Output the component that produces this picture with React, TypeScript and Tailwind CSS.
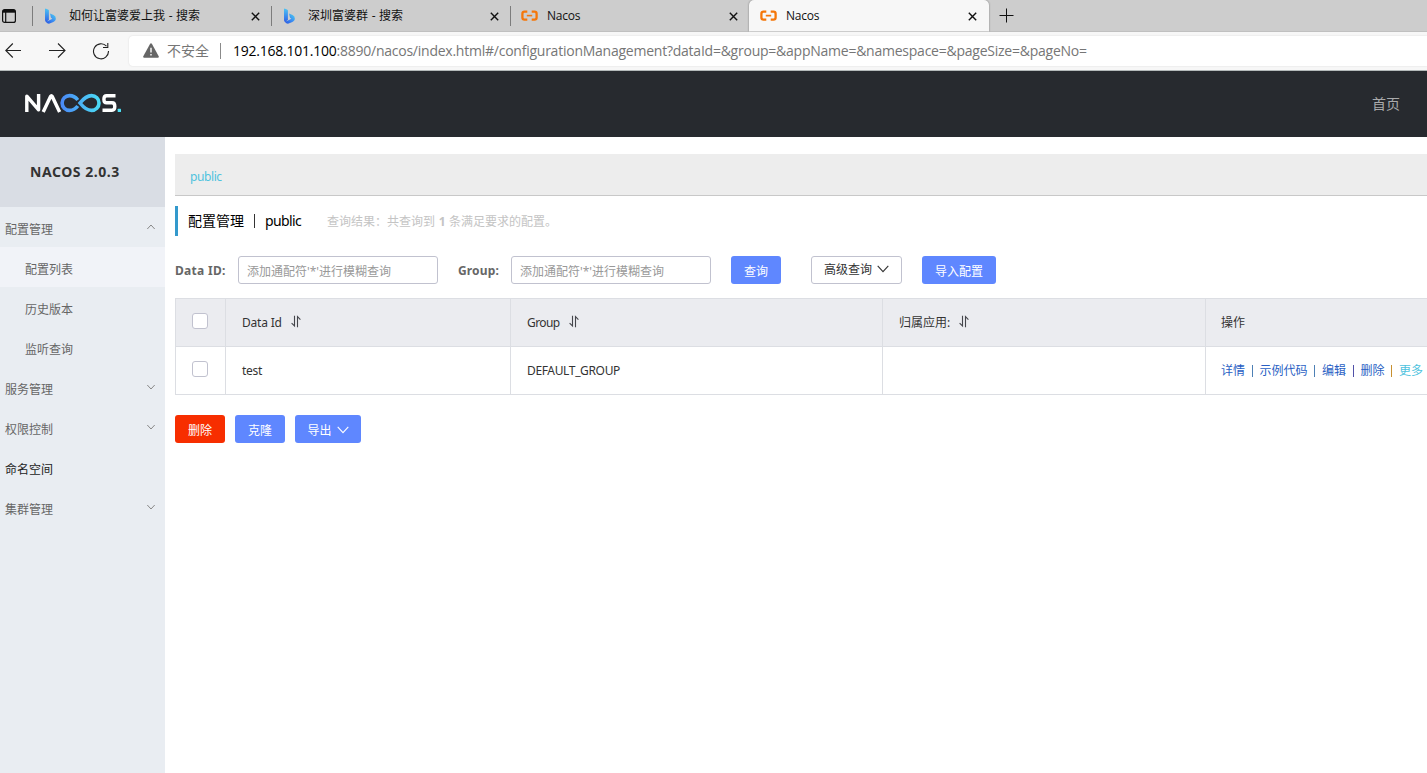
import type { ReactNode } from "react";

function BingIcon() {
  return (
    <svg width="13" height="16" viewBox="0 0 13 16" className="shrink-0">
      <defs>
        <linearGradient id="bingStem" x1="0" y1="0" x2="0" y2="1">
          <stop offset="0" stopColor="#4cc3f3" />
          <stop offset="1" stopColor="#2f62e6" />
        </linearGradient>
        <linearGradient id="bingBowl" x1="0" y1="1" x2="1" y2="0">
          <stop offset="0" stopColor="#2450e0" />
          <stop offset="0.5" stopColor="#3b8df2" />
          <stop offset="1" stopColor="#4fd3ee" />
        </linearGradient>
      </defs>
      <path d="M1.5 0.6 L4 1.6 Q4.9 1.9 4.9 2.6 V12 L2.2 13.8 Q1 13.2 1 12 V1 Z" fill="url(#bingStem)" />
      <path d="M6 5.4 L9.6 7 Q12 8.2 11.9 11 Q11.6 13 9.4 14 L5.6 15.6 Q3.4 16 2 14 Q1.5 13.2 1.3 12.6 Q3 14 5 12.6 L8.4 10.7 L7 9.8 Z" fill="url(#bingBowl)" />
    </svg>
  );
}

function NacosTabIcon() {
  return (
    <svg width="17" height="12" viewBox="0 0 17 12" className="shrink-0" fill="none" stroke="#f5770a">
      <path d="M6.3 1.6H3.5Q1.4 1.6 1.4 3.7V7.5Q1.4 9.6 3.5 9.6H6.3" strokeWidth="2.3" />
      <path d="M10.7 1.6H13.5Q15.6 1.6 15.6 3.7V7.5Q15.6 9.6 13.5 9.6H10.7" strokeWidth="2.3" />
      <path d="M5.8 5.6H11.2" strokeWidth="1.6" />
    </svg>
  );
}

function CloseIcon() {
  return (
    <svg width="9" height="9" viewBox="0 0 9 9" className="mt-px shrink-0" stroke="#111" strokeWidth="1.4">
      <path d="M0.8 0.8L8.2 8.2M8.2 0.8L0.8 8.2" />
    </svg>
  );
}

function Tab({ icon, children, className = "" }: { icon: ReactNode; children: ReactNode; className?: string }) {
  return (
    <div className={`flex h-8 shrink-0 items-center pr-[12px] text-[12px] text-[#111] ${className}`}>
      <span className="flex w-[25px] shrink-0 items-center">{icon}</span>
      <span className="grow whitespace-nowrap">{children}</span>
      <CloseIcon />
    </div>
  );
}

function Chevron({ up = false, className = "" }: { up?: boolean; className?: string }) {
  return (
    <svg width="10" height="6" viewBox="0 0 10 6" className={className} fill="none" stroke="currentColor">
      <path d={up ? "M1.3 5L5 1L8.7 5" : "M1.3 1L5 5L8.7 1"} />
    </svg>
  );
}

function ButtonChevron() {
  return (
    <svg width="12" height="8" viewBox="0 0 12 8" fill="none" stroke="currentColor" strokeWidth="1.1" className="mb-[2px] ml-[5px] shrink-0">
      <path d="M0.7 0.9L6 6.6L11.3 0.9" />
    </svg>
  );
}

function SortIcon() {
  return (
    <svg width="12" height="13" viewBox="0 0 12 13" fill="none" stroke="#45464c" strokeWidth="1.1" className="mb-[2px] ml-2 shrink-0">
      <path d="M4.5 0.7V11L1.6 8.2" />
      <path d="M7.5 12.3V1.7L10.4 4.6" />
    </svg>
  );
}

function NacosLogo() {
  return (
    <svg width="98" height="20" viewBox="0 0 98 20" fill="none" className="mb-[2px]">
      <defs>
        <linearGradient id="loop" x1="36" y1="0" x2="78" y2="0" gradientUnits="userSpaceOnUse">
          <stop offset="0" stopColor="#4a87f7" />
          <stop offset="1" stopColor="#4be0f5" />
        </linearGradient>
      </defs>
      <path d="M2.8 19V3.2L14.6 16.8V1" stroke="#fff" strokeWidth="3.4" strokeLinejoin="round" />
      <path d="M19.2 19L26.6 3.4Q27.4 2 28.2 3.4L35.6 19" stroke="#fff" strokeWidth="3.4" />
      <path d="M53.8 7Q50.4 2.6 45.5 2.6A7.4 7.4 0 0 0 45.5 17.4Q50.4 17.4 53.8 13" stroke="url(#loop)" strokeWidth="3.6" />
      <path d="M56 10Q61.8 2.6 67.6 2.6A7.4 7.4 0 0 1 67.6 17.4Q61.8 17.4 56 10Z" stroke="url(#loop)" strokeWidth="3.6" />
      <path d="M91.5 2.7H82.6Q79.9 2.7 79.9 6.2Q79.9 9.8 82.6 9.8H88Q90.8 9.8 90.8 13.5Q90.8 17.2 88 17.2H78.5" stroke="#fff" strokeWidth="3.4" />
      <rect x="93.7" y="15.8" width="3.3" height="3.2" rx="0.5" fill="#4be0f5" />
    </svg>
  );
}

function MenuItem({ label, arrow, className = "" }: { label: string; arrow?: "up" | "down"; className?: string }) {
  return (
    <div className={`flex h-10 items-center justify-between pr-[9px] pl-[5px] ${className}`}>
      <span className="pt-[5px]">{label}</span>
      {arrow && <Chevron up={arrow === "up"} className="text-[#888]" />}
    </div>
  );
}

function SubItem({ label, active = false }: { label: string; active?: boolean }) {
  return (
    <div className={`flex h-10 items-center pt-[5px] pl-[25px] ${active ? "bg-[#f1f3f8]" : ""}`}>{label}</div>
  );
}

function PrimaryButton({ children, className = "" }: { children: ReactNode; className?: string }) {
  return (
    <button className={`flex h-7 shrink-0 items-center justify-center rounded-[3px] pt-[3px] text-white ${className}`}>
      {children}
    </button>
  );
}

function SearchField() {
  return (
    <input
      className="h-7 w-[200px] shrink-0 rounded-[3px] border border-[#c1c2cf] bg-white pt-[2px] pl-2 placeholder:text-[#999]"
      placeholder="添加通配符'*'进行模糊查询"
    />
  );
}

function Checkbox() {
  return <span className="mb-[3px] block size-4 rounded-[3px] border border-[#c1c2cf] bg-white" />;
}

function Divider({ className = "" }: { className?: string }) {
  return <span className={`mr-[7px] ml-[6.5px] h-3 w-px ${className}`} />;
}

const cell = "flex items-center border-r border-[#dcdee3] pl-4";
const rowGrid = "grid h-12 grid-cols-[50px_285px_372px_323px_1fr] border-b border-l border-[#dcdee3] whitespace-nowrap";

export default function App() {
  return (
    <div className="flex h-[773px] w-[1427px] flex-col overflow-hidden bg-white font-['Noto_Sans','Noto_Sans_CJK_SC',sans-serif] text-[12px] leading-4 text-[#333]">
      <div className="flex h-8 shrink-0 items-center border-b border-[#c0c0c0] bg-[#cdcdcd] font-['Open_Sans','Noto_Sans_CJK_SC',sans-serif]">
        <div className="flex h-5 w-[33px] shrink-0 items-center border-r border-[#7c7c7c] pl-[2px]">
          <svg width="14" height="14" viewBox="0 0 14 14" fill="none" stroke="#111">
            <rect x="0.6" y="0.6" width="12.8" height="12.8" rx="2" strokeWidth="1.2" />
            <path d="M1 2.3H13" strokeWidth="2.8" />
            <path d="M3.7 3V13" strokeWidth="1.2" />
          </svg>
        </div>
        <Tab icon={<BingIcon />} className="w-[239px] pl-[11px]">如何让富婆爱上我 <span className="mx-[0.5px]">-</span> 搜索</Tab>
        <div className="-ml-px h-5 w-px bg-[#7c7c7c]" />
        <Tab icon={<BingIcon />} className="w-[239px] pl-[11px]">深圳富婆群 <span className="mx-[0.5px]">-</span> 搜索</Tab>
        <div className="-ml-px h-5 w-px bg-[#7c7c7c]" />
        <Tab icon={<NacosTabIcon />} className="w-[239px] pl-[10px] tracking-[-0.2px]">
          <span className="ml-px">Nacos</span>
        </Tab>
        <Tab icon={<NacosTabIcon />} className="-ml-px w-[240px] rounded-t-[5px] bg-[#f7f7f7] pl-[11px] tracking-[-0.2px] shadow-[0_0_2px_rgba(0,0,0,0.45)] [clip-path:inset(0_-3px_0_-3px)]">
          <span className="ml-px">Nacos</span>
        </Tab>
        <svg width="15" height="15" viewBox="0 0 15 15" className="ml-[10px]" stroke="#111">
          <path d="M7.5 0.5V14.5M0.5 7.5H14.5" />
        </svg>
      </div>

      <div className="flex h-[39px] shrink-0 items-center border-b border-[#b4baba] bg-[#f7f7f7] font-['Open_Sans','Noto_Sans_CJK_SC',sans-serif]">
        <svg width="110" height="18" viewBox="0 0 110 18" fill="none" stroke="#222" strokeWidth="1.1" className="ml-[5px] shrink-0">
          <path d="M16 8.5H0.8M7.8 1.5L0.8 8.5L7.8 15.5" />
          <path d="M44 8.5H60M53 1.5L60 8.5L53 15.5" />
          <path d="M101.5 4.2A7.5 7.5 0 1 0 103.5 9M102.8 1V5.5H98" />
        </svg>
        <div className="ml-[14px] flex h-[30px] grow items-center rounded-l-[4px] bg-white pl-[14px] text-[14px] text-[#767676] shadow-[0_0_2px_rgba(0,0,0,0.12)]">
          <svg width="16" height="15" viewBox="0 0 16 15" className="mb-px shrink-0">
            <path d="M8 0.3Q8.6 0.3 9 1L15.7 13.2Q16.2 14.7 14.8 14.7H1.2Q-0.2 14.7 0.3 13.2L7 1Q7.4 0.3 8 0.3Z" fill="#666" />
            <path d="M8 4.8V9.6M8 11V12.6" stroke="#fff" strokeWidth="1.4" />
          </svg>
          <span className="ml-2 shrink-0">不安全</span>
          <span className="mr-3 ml-[11px] h-4 w-px shrink-0 bg-[#8a8a8a]" />
          <span className="tracking-[-0.24px] whitespace-nowrap">
            <span className="text-black">192.168.101.100</span>
            :8890/nacos/index.html#/configurationManagement?dataId=&amp;group=&amp;appName=&amp;namespace=&amp;pageSize=&amp;pageNo=
          </span>
        </div>
      </div>

      <header className="flex h-[66px] shrink-0 items-center justify-between bg-[#272a2f] pr-[27px] pl-6">
        <NacosLogo />
        <span className="text-[14px] text-[#a9aaac]">首页</span>
      </header>

      <div className="flex min-h-0 grow">
        <aside className="w-[165px] shrink-0 bg-[#e9edf2] text-[#666]">
          <div className="flex h-[70px] items-center bg-[#d9dde4] pl-[30px] text-[14px] font-bold tracking-[0.55px] text-[#333]">NACOS 2.0.3</div>
          <MenuItem label="配置管理" arrow="up" />
          <SubItem label="配置列表" active />
          <SubItem label="历史版本" />
          <SubItem label="监听查询" />
          <MenuItem label="服务管理" arrow="down" />
          <MenuItem label="权限控制" arrow="down" />
          <MenuItem label="命名空间" className="text-[#222]" />
          <MenuItem label="集群管理" arrow="down" />
        </aside>

        <main className="flex min-w-0 grow flex-col pt-[17px] pl-[10px]">
          <div className="flex h-[42px] shrink-0 items-center border-b border-[#c8c8c8] bg-[#ededed] pt-[4px] pl-[15px] tracking-[-0.4px] text-[#4fc3de]">public</div>
          <div className="mt-[10px] flex h-[30px] shrink-0 items-center border-l-3 border-[#3399cc] pl-[10px] whitespace-nowrap">
            <span className="text-[14px] text-black">配置管理</span>
            <span className="mx-[10px] h-[14px] w-px bg-[#333]" />
            <span className="w-[62px] text-[14px] tracking-[-0.6px] text-black">public</span>
            <span className="pt-[2px] text-[#c4c4c4]">
              查询结果：共查询到 <b className="mx-[0.5px]">1</b> 条满足要求的配置。
            </span>
          </div>

          <div className="mt-5 flex h-7 shrink-0 items-center">
            <span className="w-[63px] shrink-0 pt-[2px] font-bold tracking-[0.3px] text-[#666]">Data ID:</span>
            <SearchField />
            <span className="ml-5 w-[53px] shrink-0 pt-[2px] font-bold tracking-[0.15px] text-[#666]">Group:</span>
            <SearchField />
            <PrimaryButton className="ml-5 w-[50px] bg-[#5f87ff]">查询</PrimaryButton>
            <button className="ml-[30px] flex h-7 w-[91px] shrink-0 items-center justify-center rounded-[3px] border border-[#c1c2cf] bg-white">
              高级查询
              <ButtonChevron />
            </button>
            <PrimaryButton className="ml-5 w-[74px] bg-[#5f87ff]">导入配置</PrimaryButton>
          </div>

          <div className="mt-[14px] shrink-0 border-t border-[#dcdee3]">
            <div className={`${rowGrid} bg-[#ebecf0]`}>
              <div className={cell}><Checkbox /></div>
              <div className={`${cell} tracking-[-0.2px]`}>Data Id<SortIcon /></div>
              <div className={`${cell} tracking-[-0.6px]`}>Group<SortIcon /></div>
              <div className={cell}>归属应用:<SortIcon /></div>
              <div className="flex items-center pl-[15px]">操作</div>
            </div>
            <div className={rowGrid}>
              <div className={cell}><Checkbox /></div>
              <div className={`${cell} tracking-[-0.3px]`}>test</div>
              <div className={`${cell} tracking-[-0.35px]`}>DEFAULT_GROUP</div>
              <div className={cell} />
              <div className="flex items-center pl-[15px] text-[#2a5fc4]">
                <a>详情</a>
                <Divider className="bg-[#4d80b5]" />
                <a>示例代码</a>
                <Divider className="bg-[#4d80b5]" />
                <a>编辑</a>
                <Divider className="bg-[#5050a8]" />
                <a>删除</a>
                <Divider className="bg-[#c8902f]" />
                <a className="text-[#4fc3de]">更多</a>
              </div>
            </div>
          </div>

          <div className="mt-5 flex shrink-0 gap-[10px]">
            <PrimaryButton className="w-[50px] bg-[#f72e00]">删除</PrimaryButton>
            <PrimaryButton className="w-[50px] bg-[#5f87ff]">克隆</PrimaryButton>
            <PrimaryButton className="w-[66px] bg-[#5f87ff]">
              导出
              <ButtonChevron />
            </PrimaryButton>
          </div>
        </main>
      </div>
    </div>
  );
}
